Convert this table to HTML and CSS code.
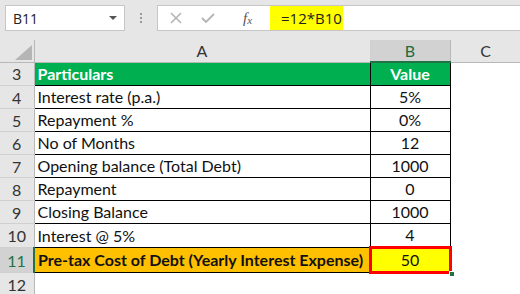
FILE: index.html
```html
<!DOCTYPE html>
<html>
<head>
<meta charset="utf-8">
<link rel="stylesheet" href="styles.css">
</head>
<body>
<div class="toolbar">
  <div class="namebox"><span class="nb-text">B11</span><span class="nb-arrow"></span></div>
  <div class="dots"><i></i><i></i><i></i></div>
  <div class="fbar">
    <div class="ficons">
      <svg class="ic" width="14" height="14" viewBox="0 0 14 14"><path d="M2 2L12 12M12 2L2 12" stroke="#b4b4b4" stroke-width="1.6" fill="none"/></svg>
      <svg class="ic" width="16" height="14" viewBox="0 0 16 14"><path d="M2 7L6 11L14 3" stroke="#b4b4b4" stroke-width="1.8" fill="none"/></svg>
      <span class="fx">f<sub>x</sub></span>
    </div>
    <div class="formula">=12*B10</div>
  </div>
</div>
<table class="sheet">
  <colgroup><col class="c0"><col class="ca"><col class="cb"><col class="cc"></colgroup>
  <tr class="hdr">
    <th class="corner"><span class="tri"></span></th>
    <th>A</th>
    <th class="sel">B</th>
    <th>C</th>
  </tr>
  <tr><th class="rn">3</th><td class="g">Particulars</td><td class="g ctr">Value</td><td class="e"></td></tr>
  <tr><th class="rn">4</th><td class="b">Interest rate (p.a.)</td><td class="b ctr">5%</td><td class="e"></td></tr>
  <tr><th class="rn">5</th><td class="b">Repayment %</td><td class="b ctr">0%</td><td class="e"></td></tr>
  <tr><th class="rn">6</th><td class="b">No of Months</td><td class="b ctr">12</td><td class="e"></td></tr>
  <tr><th class="rn">7</th><td class="b">Opening balance (Total Debt)</td><td class="b ctr">1000</td><td class="e"></td></tr>
  <tr><th class="rn">8</th><td class="b">Repayment</td><td class="b ctr">0</td><td class="e"></td></tr>
  <tr><th class="rn">9</th><td class="b">Closing Balance</td><td class="b ctr">1000</td><td class="e"></td></tr>
  <tr><th class="rn">10</th><td class="b">Interest @ 5%</td><td class="b ctr">4</td><td class="e"></td></tr>
  <tr><th class="rn rsel">11</th><td class="o">Pre-tax Cost of Debt (Yearly Interest Expense)</td><td class="y ctr"><span class="handle"></span>50</td><td class="e"></td></tr>
  <tr><th class="rn">12</th><td class="e"></td><td class="e"></td><td class="e"></td></tr>
</table>
</body>
</html>
```
FILE: styles.css
```css
html, body {
  margin: 0;
  padding: 0;
  background: #e6e6e6;
  width: 520px;
  height: 294px;
  overflow: hidden;
  font-family: "Lato", "Open Sans", sans-serif;
}
.toolbar {
  height: 40px;
  box-sizing: border-box;
  padding: 5px 0 0 5px;
  display: flex;
  align-items: flex-start;
}
.namebox {
  flex: none;
  width: 120px;
  height: 26px;
  box-sizing: border-box;
  background: #fff;
  border: 1px solid #c6c6c6;
  display: flex;
  align-items: center;
  justify-content: space-between;
  padding: 0 7px 0 7px;
}
.nb-text {
  font-family: "Open Sans", sans-serif;
  font-size: 14px;
  color: #222;
}
.nb-arrow {
  width: 0;
  height: 0;
  border-left: 4px solid transparent;
  border-right: 4px solid transparent;
  border-top: 4px solid #555;
}
.dots {
  flex: none;
  width: 32px;
  height: 26px;
  display: flex;
  flex-direction: column;
  align-items: center;
  justify-content: center;
  gap: 2px;
}
.dots i {
  width: 2px;
  height: 2px;
  background: #9a9a9a;
}
.fbar {
  flex: 1;
  height: 26px;
  box-sizing: border-box;
  background: #fff;
  border: 1px solid #c6c6c6;
  border-right: none;
  display: flex;
  align-items: stretch;
}
.ficons {
  flex: none;
  width: 112px;
  box-sizing: border-box;
  display: flex;
  align-items: center;
  padding-left: 11px;
  gap: 17px;
}
.ic { flex: none; }
.fx {
  font-family: "Liberation Serif", serif;
  font-style: italic;
  font-size: 15px;
  color: #555;
  margin-left: 10px;
}
.fx sub {
  font-size: 11px;
  vertical-align: -1px;
}
.formula {
  flex: none;
  background: #ffff00;
  width: 73px;
  box-sizing: border-box;
  padding-left: 11px;
  font-family: "Open Sans", sans-serif;
  font-size: 15px;
  line-height: 24px;
  color: #222;
}
.sheet {
  border-collapse: collapse;
  table-layout: fixed;
  width: 521px;
  font-size: 16px;
  color: #111;
}
.c0 { width: 34px; }
.ca { width: 336px; }
.cb { width: 80px; }
.cc { width: 71px; }
.hdr { height: 22px; }
.hdr th {
  height: 21px;
  padding: 0;
  background: #e6e6e6;
  font-weight: normal;
  font-size: 16px;
  color: #333;
  border-right: 1px solid #d0d0d0;
  border-bottom: 1px solid #b8b8b8;
}
.hdr th.corner {
  position: relative;
  border-right: 1px solid #b8b8b8;
}
.tri {
  position: absolute;
  right: 2px;
  bottom: 2px;
  width: 0;
  height: 0;
  border-left: 17px solid transparent;
  border-bottom: 15px solid #b5b5b5;
}
.hdr th.sel {
  background: #d2d2d2;
  color: #1e6b3e;
  border-bottom: 2px solid #217346;
  border-left: 1px solid #b8b8b8;
  border-right: 1px solid #b8b8b8;
}
tr { height: 23px; }
th.rn {
  padding: 0;
  background: #e6e6e6;
  font-weight: normal;
  font-size: 16px;
  color: #333;
  text-align: center;
  border-right: 1px solid #b8b8b8;
  border-bottom: 1px solid #d0d0d0;
}
th.rn.rsel {
  background: #d2d2d2;
  color: #217346;
  border-right: 2px solid #217346;
}
td {
  padding: 0 0 0 3px;
  height: 22px;
  line-height: 22px;
  white-space: nowrap;
  overflow: hidden;
}
td.b {
  background: #fff;
  border: 1px solid #000;
}
td.g {
  background: #00b050;
  color: #fff;
  font-weight: bold;
  border: 1px solid #000;
}
td.o {
  background: #ffc000;
  font-weight: bold;
  border: 1px solid #000;
}
td.y {
  background: #ffff00;
  border: 3px solid #ff0000;
  position: relative;
  overflow: visible;
}
.handle {
  position: absolute;
  right: -6px;
  bottom: -6px;
  width: 4px;
  height: 4px;
  background: #217346;
  border: 1px solid #fff;
}
td.ctr {
  text-align: center;
  padding: 0;
}
td.e {
  background: #fff;
}
```
